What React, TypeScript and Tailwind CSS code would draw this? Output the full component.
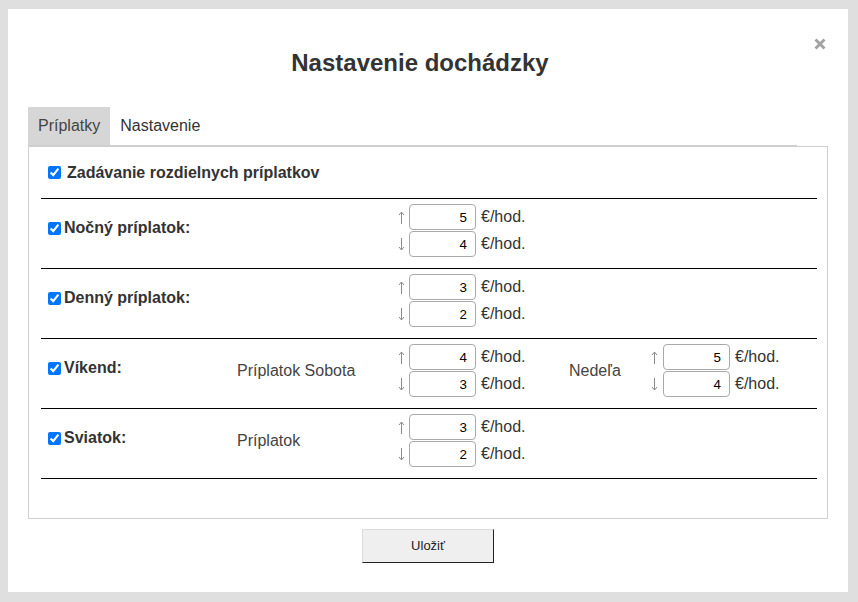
import React from "react";

function ArrowIcon({ dir }: { dir: "up" | "down" }) {
  return (
    <svg width="7" height="13" viewBox="0 0 7 13" className="block">
      {dir === "up" ? (
        <path d="M3.5 1 V13 M1 4 L3.5 1 L6 4" stroke="#8a8a8a" strokeWidth="1" fill="none" />
      ) : (
        <path d="M3.5 0 V12 M1 9 L3.5 12 L6 9" stroke="#8a8a8a" strokeWidth="1" fill="none" />
      )}
    </svg>
  );
}

function Line({ dir, value, arrowW }: { dir: "up" | "down"; value: string; arrowW: string }) {
  return (
    <div className="flex items-center h-[26px]">
      <span className={`${arrowW} flex items-center pl-[1px]`}>
        <ArrowIcon dir={dir} />
      </span>
      <input
        type="text"
        defaultValue={value}
        className="w-[67px] h-[26px] border border-[#a9a9a9] rounded-[4px] text-right pr-[8px] text-[13.33px] text-black bg-white outline-none"
      />
      <span className="ml-[5px] text-[16px] text-[#333]">€/hod.</span>
    </div>
  );
}

function Pair({ up, down, arrowW = "w-[12px]", unitW }: { up: string; down: string; arrowW?: string; unitW?: string }) {
  return (
    <div className={`flex flex-col gap-[1px] ${unitW ?? ""}`}>
      <Line dir="up" value={up} arrowW={arrowW} />
      <Line dir="down" value={down} arrowW={arrowW} />
    </div>
  );
}

function Row({
  label,
  col2,
  up,
  down,
  extra,
}: {
  label: string;
  col2?: string;
  up: string;
  down: string;
  extra?: { label: string; up: string; down: string };
}) {
  return (
    <div className="flex items-center h-[70px] border-b border-black pt-[5px] pb-[11px]">
      <div className="w-[196px] pl-[7px] flex items-center mb-[5px]">
        <input type="checkbox" defaultChecked className="w-[13px] h-[13px] m-0 accent-[#0075ff]" />
        <span className="ml-[3px] text-[16px] font-bold text-[#333]">{label}</span>
      </div>
      <div className="w-[160px] text-[16px] text-[#444]">{col2 ?? ""}</div>
      <Pair up={up} down={down} unitW="w-[172px]" />
      {extra && (
        <>
          <div className="w-[81px] text-[16px] text-[#444]">{extra.label}</div>
          <Pair up={extra.up} down={extra.down} arrowW="w-[13px]" />
        </>
      )}
    </div>
  );
}

export default function App() {
  return (
    <div
      className="w-[858px] h-[602px] bg-[#dfdfdf] pt-[9px] pl-[8px]"
      style={{ fontFamily: "'Liberation Sans', Arial, sans-serif" }}
    >
      <div className="relative w-[840px] h-[583px] bg-white flex flex-col">
        <button className="absolute left-[806px] top-[29px] w-[12px] h-[12px]" aria-label="close">
          <svg width="12" height="12" viewBox="0 0 12 12">
            <path d="M1.5 1.5 L10.5 10.5 M10.5 1.5 L1.5 10.5" stroke="#a3a3a3" strokeWidth="3" strokeLinecap="butt" />
          </svg>
        </button>
        <h1 className="mt-[40px] h-[28px] leading-[28px] text-center pr-[16px] text-[24px] font-bold text-[#333]">
          Nastavenie dochádzky
        </h1>
        <div className="mt-[30px] ml-[20px] w-[769px] h-[39px] flex border-b border-[#cfcfcf]">
          <div className="h-full px-[10px] flex items-center bg-[#d6d6d6] text-[16px] text-[#444]">Príplatky</div>
          <div className="h-full px-[10px] flex items-center text-[16px] text-[#333]">Nastavenie</div>
        </div>
        <div className="ml-[20px] w-[800px] border border-[#cfcfcf] pl-[12px] pr-[10px] pb-[39px]">
          <div className="h-[52px] border-b border-black flex items-center pl-[7px]">
            <input type="checkbox" defaultChecked className="w-[13px] h-[13px] m-0 accent-[#0075ff]" />
            <span className="ml-[6px] text-[16px] font-bold text-[#333]">Zadávanie rozdielnych príplatkov</span>
          </div>
          <Row label="Nočný príplatok:" up="5" down="4" />
          <Row label="Denný príplatok:" up="3" down="2" />
          <Row
            label="Víkend:"
            col2="Príplatok Sobota"
            up="4"
            down="3"
            extra={{ label: "Nedeľa", up: "5", down: "4" }}
          />
          <Row label="Sviatok:" col2="Príplatok" up="3" down="2" />
        </div>
        <div className="flex justify-center mt-[10px]">
          <button className="w-[132px] h-[34px] bg-[#efefef] border border-t-[#dcdcdc] border-l-[#dcdcdc] border-r-[#222] border-b-[#222] text-[13px] text-[#222]">
            Uložiť
          </button>
        </div>
      </div>
    </div>
  );
}
